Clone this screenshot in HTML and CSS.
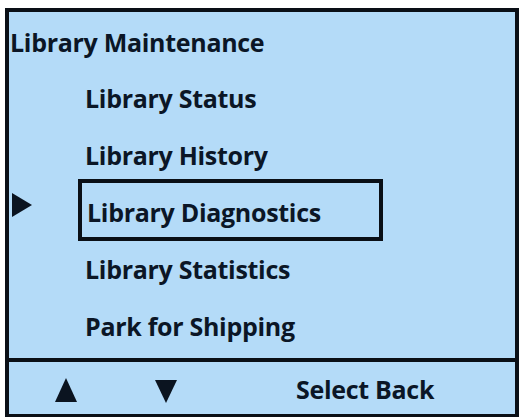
FILE: index.html
```html
<!DOCTYPE html>
<html>
<head>
<meta charset="utf-8">
<link rel="stylesheet" href="styles.css">
</head>
<body>
<div class="screen">
  <div class="menu">
    <div class="title">Library Maintenance</div>
    <div class="item">Library Status</div>
    <div class="item">Library History</div>
    <div class="item current">
      <svg class="pointer" width="20" height="24" viewBox="0 0 20 24"><polygon points="0,0 20,12 0,24" fill="#0b1420"/></svg>
      <span class="sel">Library Diagnostics</span>
    </div>
    <div class="item">Library Statistics</div>
    <div class="item">Park for Shipping</div>
  </div>
  <div class="footer">
    <svg class="up" width="22" height="24" viewBox="0 0 22 24"><polygon points="11,0 22,24 0,24" fill="#0b1420"/></svg>
    <svg class="down" width="22" height="23" viewBox="0 0 22 23"><polygon points="0,0 22,0 11,23" fill="#0b1420"/></svg>
    <span class="keys">Select Back</span>
  </div>
</div>
</body>
</html>
```
FILE: styles.css
```css
html, body {
  margin: 0;
  padding: 0;
  background: #ffffff;
}
body {
  width: 520px;
  height: 417px;
  overflow: hidden;
  font-family: "Open Sans", Lato, sans-serif;
  font-weight: 700;
  color: #0b1626;
}
.screen {
  box-sizing: border-box;
  margin: 8px 0 0 5px;
  width: 514px;
  height: 409px;
  border: 4px solid #0a0f16;
  border-bottom-width: 3px;
  background: #b4dbf8;
  display: flex;
  flex-direction: column;
}
.menu {
  height: 346px;
  padding-top: 2px;
  box-sizing: border-box;
  font-size: 25px;
  line-height: 57px;
  letter-spacing: -0.3px;
}
.title {
  padding-left: 1px;
  height: 56px;
}
.item {
  padding-left: 76px;
  position: relative;
}
.sel {
  display: inline-block;
  box-sizing: border-box;
  width: 305px;
  margin-left: -7px;
  margin-top: -6px;
  margin-bottom: -1px;
  padding: 14px 0 10px 5px;
  line-height: 30px;
  border: 4px solid #0a0f16;
}
.pointer {
  position: absolute;
  left: 3px;
  top: 9px;
}
.footer {
  flex: 1;
  border-top: 4px solid #0a0f16;
  display: flex;
  align-items: flex-start;
  font-size: 25px;
  letter-spacing: -0.3px;
}
.up {
  margin: 16px 0 0 46px;
}
.down {
  margin: 18px 0 0 78px;
}
.keys {
  margin: 12px 0 0 119px;
  line-height: 30px;
}
```
